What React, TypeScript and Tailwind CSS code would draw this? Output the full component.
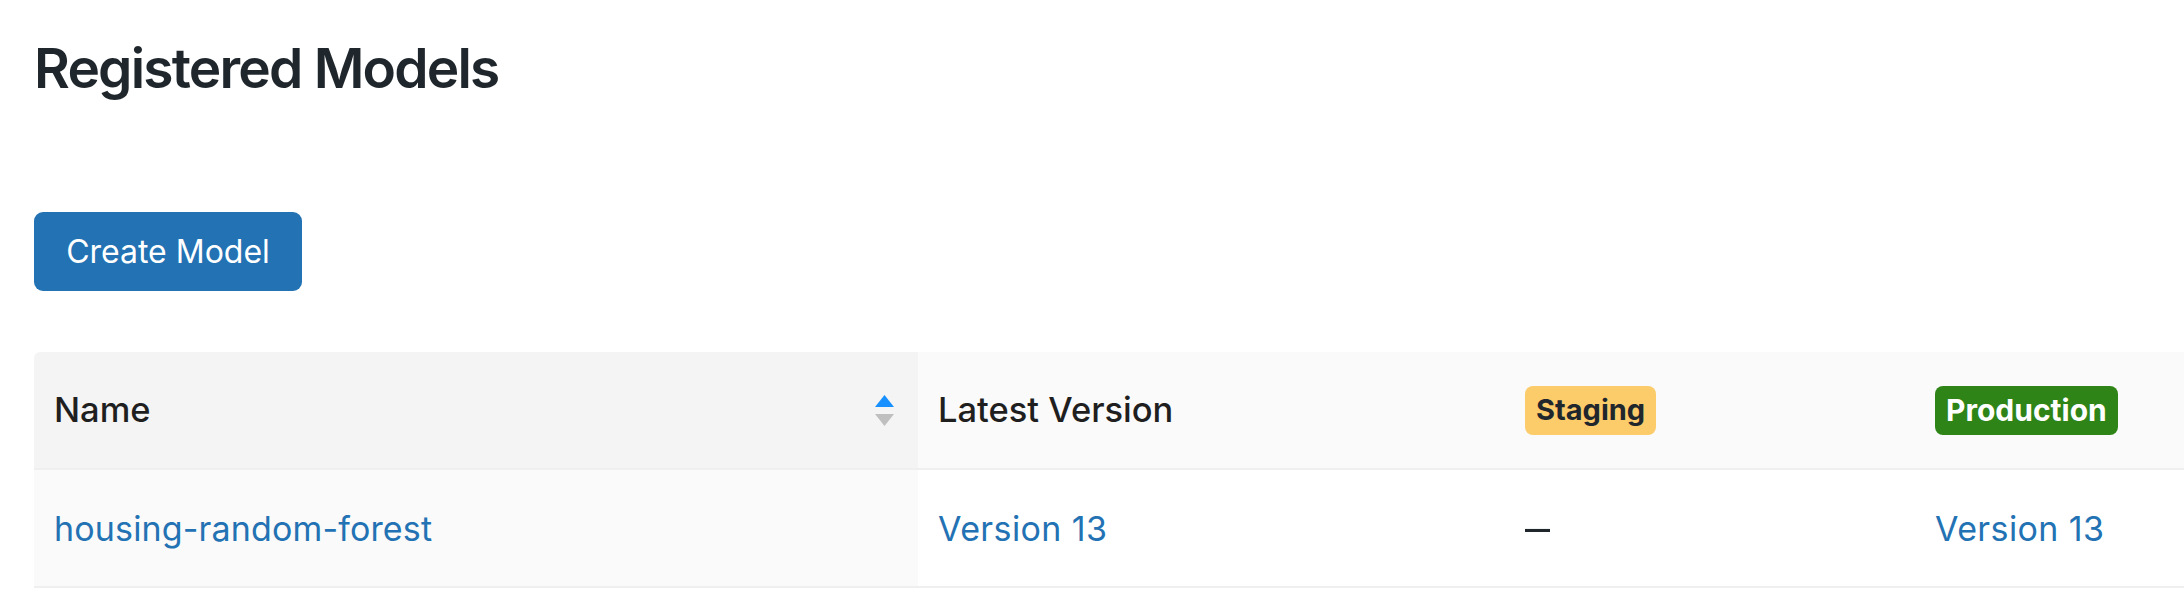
import React from 'react';

const SortIcon: React.FC = () => (
    <div className="flex flex-col items-center gap-[7px]">
        <svg width="19" height="12" viewBox="0 0 19 12">
            <polygon points="9.5,0 19,12 0,12" fill="#1890ff" />
        </svg>
        <svg width="19" height="12" viewBox="0 0 19 12">
            <polygon points="0,0 19,0 9.5,12" fill="#bfbfbf" />
        </svg>
    </div>
);

const App: React.FC = () => {
    const font = { fontFamily: 'Inter, "Noto Sans", sans-serif' };

    return (
        <div style={font} className="w-[2184px] h-[600px] overflow-hidden bg-white pl-[34px] pt-[35px]">
            <h1 className="text-[55px] leading-[66px] font-semibold text-[#1f272d] tracking-[-1.8px]">Registered Models</h1>

            <button className="mt-[111px] w-[268px] h-[79px] rounded-[9px] bg-[#2272b4] text-white text-[32px] leading-none flex items-center justify-center">
                Create Model
            </button>

            <div className="mt-[61px] w-[2150px]">
                {/* header */}
                <div className="flex h-[118px] border-b-2 border-[#efefef] text-[34.5px] font-medium text-[#1f1f1f]">
                    <div className="w-[884px] shrink-0 bg-[#f4f4f4] rounded-tl-[6px] pl-[20px] pr-[24px] flex items-center justify-between">
                        <span>Name</span>
                        <SortIcon />
                    </div>
                    <div className="w-[587px] shrink-0 bg-[#fafafa] pl-[20px] flex items-center">Latest Version</div>
                    <div className="w-[410px] shrink-0 bg-[#fafafa] pl-[20px] flex items-center">
                        <span className="h-[49px] px-[11px] rounded-[8px] bg-[#fccb6a] text-[#1f272d] text-[29px] font-bold flex items-center">Staging</span>
                    </div>
                    <div className="flex-1 bg-[#fafafa] pl-[20px] flex items-center">
                        <span className="h-[49px] px-[11px] rounded-[8px] bg-[#2f8418] text-white text-[30px] font-bold flex items-center">Production</span>
                    </div>
                </div>

                {/* row */}
                <div className="flex h-[118px] border-b-2 border-[#efefef] text-[34px] tracking-[0.15px]">
                    <div className="w-[884px] shrink-0 bg-[#fafafa] pl-[20px] flex items-center text-[#2272b4]">housing-random-forest</div>
                    <div className="w-[587px] shrink-0 pl-[20px] flex items-center text-[#2272b4] tracking-[0.4px]">Version 13</div>
                    <div className="w-[410px] shrink-0 pl-[20px] flex items-center text-[#1f272d] text-[50px] font-light leading-none">–</div>
                    <div className="flex-1 pl-[20px] flex items-center text-[#2272b4] tracking-[0.4px]">Version 13</div>
                </div>
            </div>
        </div>
    );
};

export default App;
